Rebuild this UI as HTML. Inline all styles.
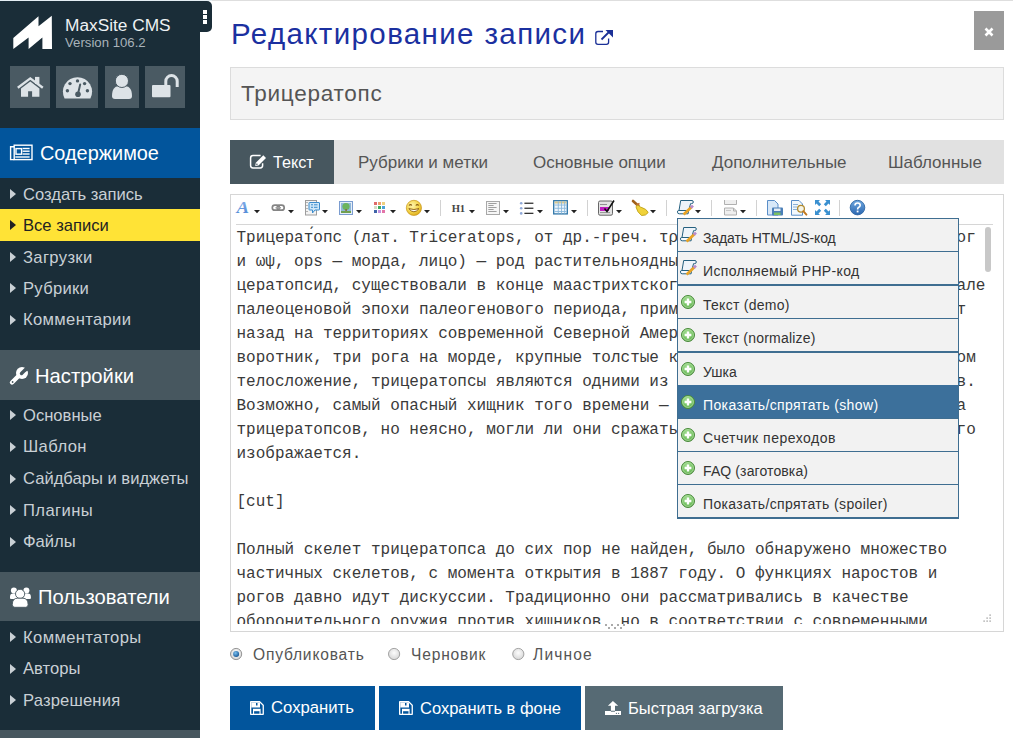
<!DOCTYPE html>
<html><head><meta charset="utf-8">
<style>
*{box-sizing:border-box;margin:0;padding:0}
html,body{width:1013px;height:738px;overflow:hidden;background:#fff}
body{position:relative;font-family:"Liberation Sans",sans-serif}
.a{position:absolute;white-space:pre;line-height:1}
svg.a{overflow:visible}
#topline{left:0;top:0;width:1013px;height:1px;background:#dedede}
#side{left:0;top:1px;width:200px;height:737px;background:#1a2d38}
#tab{left:190px;top:1px;width:22px;height:31px;background:#1a2d38;border-radius:0 5px 5px 0}
.dot{left:203px;width:4px;height:4px;background:#fff}
.ibox{top:66px;height:42px;background:#4a5a63}
.sh{left:0;width:200px;height:50px}
.mi{left:23px;color:#c9d0d5;font-size:16.6px}
.tri{left:9.8px;width:0;height:0;border-top:5px solid transparent;border-bottom:5px solid transparent;border-left:6.3px solid #c9d0d5}
.tb{left:0;top:0}
.arr{position:absolute;top:210px;width:0;height:0;border-left:3px solid transparent;border-right:3px solid transparent;border-top:3.5px solid #222}
.sep{position:absolute;top:200px;width:1px;height:16px;background:#d0d0d0}
.dd{position:absolute;left:678px;width:280px;height:32px;background:#f2f2f2}
.ddb{position:absolute;left:678px;width:280px;background:#3f6e91}
.ddt{position:absolute;left:703px;font-size:14px;color:#333;white-space:pre;line-height:1}
.plus{position:absolute;left:681px;width:14px;height:14px}
.tabt{position:absolute;top:154px;font-size:17px;color:#555;white-space:pre;line-height:1}
</style></head><body>
<div class="a" id="topline"></div>
<div class="a" style="left:0;top:0;width:212px;height:1px;background:#e4eef4"></div>
<div class="a" id="side"></div>
<div class="a" id="tab"></div>
<div class="a dot" style="top:10px"></div>
<div class="a dot" style="top:15px"></div>
<div class="a dot" style="top:20px"></div>

<!-- logo -->
<svg class="a" style="left:0;top:0" width="60" height="60" viewBox="0 0 60 60">
<path d="M13.3 49 L13.3 38 L38.5 16.3 L38.5 26.2 L51.8 15.8 L52 49 L42.4 49 L42.4 37.5 L28.6 49 L28.6 37.5 Z" fill="#fff"/>
</svg>
<div class="a" style="left:65px;top:17px;font-size:17.3px;color:#eef2f4">MaxSite CMS</div>
<div class="a" style="left:65px;top:36px;font-size:13.2px;color:#a9b3ba">Version 106.2</div>

<!-- icon boxes -->
<div class="a ibox" style="left:10px;width:40px"></div>
<div class="a ibox" style="left:56px;width:42px"></div>
<div class="a ibox" style="left:105px;width:34px"></div>
<div class="a ibox" style="left:145px;width:40px"></div>
<!-- home -->
<svg class="a" style="left:17px;top:76px" width="27" height="22" viewBox="0 0 27 22">
 <path d="M0.8 11.8 L13.3 2.4 L25.8 11.8" fill="none" stroke="#dde3e7" stroke-width="2.4"/>
 <rect x="18" y="0.9" width="4.4" height="7" fill="#dde3e7"/>
 <path d="M4 12.6 L13.3 5.6 L22.4 12.6 L22.4 20.8 L15.1 20.8 L15.1 15.2 L11.1 15.2 L11.1 20.8 L4 20.8 Z" fill="#dde3e7"/>
</svg>
<!-- gauge -->
<svg class="a" style="left:62px;top:76px" width="32" height="24" viewBox="0 0 32 24">
 <path d="M2.6 22.6 A14.6 14.6 0 1 1 28.4 22.6 Z" fill="#dde3e7"/>
 <g fill="#4a5a63"><circle cx="8" cy="7.6" r="1.7"/><circle cx="15.5" cy="4.9" r="1.7"/><circle cx="22.6" cy="7.6" r="1.7"/><circle cx="5.4" cy="14.7" r="1.7"/><circle cx="25.4" cy="14.7" r="1.7"/><circle cx="16" cy="18.2" r="2.8"/></g>
 <path d="M16 18 L18.2 8.4" stroke="#4a5a63" stroke-width="2" stroke-linecap="round"/>
</svg>
<!-- user -->
<svg class="a" style="left:111px;top:74px" width="23" height="26" viewBox="0 0 23 26">
 <path d="M1 22 C1 15.5 3.5 12.2 7.5 12.2 L14.5 12.2 C18.5 12.2 21 15.5 21 22 Q21 25 18 25 L4 25 Q1 25 1 22 Z" fill="#dde3e7"/>
 <circle cx="10.9" cy="6.9" r="6.6" fill="#dde3e7" stroke="#4a5a63" stroke-width="1"/>
</svg>
<!-- unlock -->
<svg class="a" style="left:151px;top:74px" width="29" height="25" viewBox="0 0 29 25">
 <rect x="1" y="11" width="18.5" height="12.2" rx="1" fill="#dde3e7"/>
 <path d="M14.8 11.5 L14.8 7.3 A5.7 5.7 0 0 1 26.2 7.3 L26.2 13" fill="none" stroke="#dde3e7" stroke-width="3"/>
</svg>

<!-- section headers -->
<div class="a sh" style="top:128px;background:#02559c"></div>
<svg class="a" style="left:9px;top:144px" width="25" height="18" viewBox="0 0 25 18">
 <rect x="5.2" y="1.2" width="17.8" height="14.4" fill="none" stroke="#fff" stroke-width="1.4"/>
 <path d="M5.2 2.8 H1.6 V15.6 H5.2" fill="none" stroke="#fff" stroke-width="1.4"/>
 <rect x="7" y="4.6" width="5.6" height="5.6" fill="none" stroke="#fff" stroke-width="1.4"/>
 <rect x="13.6" y="3.8" width="7" height="1.4" fill="#fff"/>
 <rect x="13.6" y="6.5" width="7" height="1.4" fill="#fff"/>
 <rect x="13.6" y="9.3" width="7" height="1.4" fill="#fff"/>
 <rect x="6.3" y="12.3" width="14.3" height="1.4" fill="#fff"/>
</svg>
<div class="a" style="left:40px;top:144px;font-size:19.9px;color:#fff">Содержимое</div>
<div class="a" style="left:0;top:209px;width:200px;height:32px;background:#ffe336"></div>

<div class="a tri" style="top:189.4px"></div>
<div class="a tri" style="top:220.4px;border-left-color:#222"></div>
<div class="a tri" style="top:252.4px"></div>
<div class="a tri" style="top:283.4px"></div>
<div class="a tri" style="top:315.4px"></div>
<div class="a mi" style="top:187px">Создать запись</div>
<div class="a mi" style="top:218px;color:#222">Все записи</div>
<div class="a mi" style="top:250px;letter-spacing:0.35px">Загрузки</div>
<div class="a mi" style="top:281px;letter-spacing:0.3px">Рубрики</div>
<div class="a mi" style="top:312px;letter-spacing:0.35px">Комментарии</div>

<div class="a sh" style="top:350px;background:#47575f"></div>
<svg class="a" style="left:9px;top:366px" width="21" height="20" viewBox="0 0 21 20">
 <path d="M3 16.5 L10.5 9" stroke="#fff" stroke-width="4.4" stroke-linecap="round"/>
 <circle cx="13" cy="7" r="6" fill="#fff"/>
 <path d="M13 7 L19.5 0.5 L21 -1 L23 3 Z" fill="#47575f"/>
 <path d="M12.5 7.5 L17 3" stroke="#47575f" stroke-width="3.4" stroke-linecap="round"/>
 <circle cx="3.6" cy="16" r="0.9" fill="#47575f"/>
</svg>
<div class="a" style="left:35px;top:366px;font-size:20.2px;color:#fff">Настройки</div>
<div class="a tri" style="top:410.4px"></div>
<div class="a tri" style="top:442.4px"></div>
<div class="a tri" style="top:474.4px"></div>
<div class="a tri" style="top:505.4px"></div>
<div class="a tri" style="top:537.4px"></div>
<div class="a mi" style="top:408px">Основные</div>
<div class="a mi" style="top:439px;letter-spacing:0.4px">Шаблон</div>
<div class="a mi" style="top:471px">Сайдбары и виджеты</div>
<div class="a mi" style="top:503px;letter-spacing:0.4px">Плагины</div>
<div class="a mi" style="top:534px">Файлы</div>

<div class="a sh" style="top:572px;background:#47575f;height:49px"></div>
<svg class="a" style="left:9px;top:587px" width="23" height="21" viewBox="0 0 23 21">
 <g fill="#fff">
 <circle cx="4.9" cy="3.4" r="3"/><circle cx="17.4" cy="3.4" r="3"/>
 <path d="M1 10 Q0.9 6.6 4.2 6.6 H7.5 L9 12 H2 Q1 12 1 11 Z"/>
 <path d="M21.9 10 Q22 6.6 18.7 6.6 H15.4 L13.9 12 H20.9 Q21.9 12 21.9 11 Z"/>
 </g>
 <circle cx="11.1" cy="6.9" r="4.6" fill="#fff" stroke="#47575f" stroke-width="0.9"/>
 <path d="M3.3 17.6 Q3.3 11.2 8.6 11.2 H13.8 Q19.1 11.2 19.1 17.6 Q19.1 20.3 16.6 20.3 H5.8 Q3.3 20.3 3.3 17.6 Z" fill="#fff" stroke="#47575f" stroke-width="0.9"/>
</svg>
<div class="a" style="left:38px;top:587px;font-size:20.2px;color:#fff">Пользователи</div>
<div class="a tri" style="top:632.4px"></div>
<div class="a tri" style="top:664.4px"></div>
<div class="a tri" style="top:695.4px"></div>
<div class="a mi" style="top:630px;letter-spacing:0.37px">Комментаторы</div>
<div class="a mi" style="top:661px">Авторы</div>
<div class="a mi" style="top:693px;letter-spacing:0.17px">Разрешения</div>
<div class="a sh" style="top:730px;background:#47575f"></div>

<!-- main -->
<div class="a" style="left:231px;top:19px;font-size:29.5px;letter-spacing:1.37px;color:#1b30a0">Редактирование записи</div>
<svg class="a" style="left:594px;top:29px" width="20" height="17" viewBox="0 0 20 17">
 <path d="M9 2.5 H4 Q1.8 2.5 1.8 4.7 V13.2 Q1.8 15.3 4 15.3 H12.4 Q14.6 15.3 14.6 13.2 V9.5" fill="none" stroke="#1b3097" stroke-width="1.3"/>
 <path d="M7.5 10.5 L16 2" stroke="#1b3097" stroke-width="1.8"/>
 <path d="M11.5 1 H19 V8.5 Z" fill="#1b3097"/>
</svg>
<div class="a" style="left:974px;top:11px;width:30px;height:39px;background:#9a9a9a"></div>
<svg class="a" style="left:984px;top:27px" width="10" height="10" viewBox="0 0 10 10">
 <path d="M1.5 1.5 L8.5 8.5 M8.5 1.5 L1.5 8.5" stroke="#fff" stroke-width="2.6"/>
</svg>

<div class="a" style="left:230px;top:67px;width:774px;height:53px;background:#f4f4f4;border:1px solid #dcdcdc"></div>
<div class="a" style="left:241px;top:83px;font-size:22.5px;letter-spacing:0.75px;color:#555">Трицератопс</div>

<div class="a" style="left:230px;top:140px;width:774px;height:44px;background:#e1e1e1"></div>
<div class="a" style="left:230px;top:140px;width:104px;height:44px;background:#47575f"></div>
<svg class="a" style="left:249px;top:153px" width="19" height="16" viewBox="0 0 19 16">
 <path d="M11.6 2.6 H4 Q1.6 2.6 1.6 5 V12.6 Q1.6 15 4 15 H11.2 Q13.6 15 13.6 12.6 V10.2" fill="none" stroke="#fff" stroke-width="1.5"/>
 <path d="M6.2 13 L6.8 9.7 L14.3 2.2 L17 4.9 L9.5 12.4 Z" fill="#fff"/>
 <circle cx="7.9" cy="11.3" r="0.8" fill="#47575f"/>
</svg>
<div class="tabt" style="left:273px;color:#fff;font-size:16.2px">Текст</div>
<div class="tabt" style="left:358px">Рубрики и метки</div>
<div class="tabt" style="left:533px">Основные опции</div>
<div class="tabt" style="left:712px">Дополнительные</div>
<div class="tabt" style="left:888px">Шаблонные</div>

<!-- editor -->
<div class="a" style="left:230px;top:194px;width:774px;height:438px;border:1px solid #d6d6d6"></div>
<div class="a" style="left:236px;top:224px;width:757px;height:1px;background:#d6d6d6"></div>
<svg class="a tb" width="1013" height="230" viewBox="0 0 1013 230">
<defs>
 <linearGradient id="gA" x1="0" y1="0" x2="0" y2="1"><stop offset="0" stop-color="#8cb4ec"/><stop offset="1" stop-color="#4a84d4"/></linearGradient>
 <radialGradient id="gS" cx="0.4" cy="0.35" r="0.7"><stop offset="0" stop-color="#fff6b0"/><stop offset="0.6" stop-color="#f3d44a"/><stop offset="1" stop-color="#d9a516"/></radialGradient>
 <linearGradient id="gB" x1="0" y1="0" x2="0" y2="1"><stop offset="0" stop-color="#70a8e0"/><stop offset="1" stop-color="#2a66b0"/></linearGradient>
</defs>
<!-- A -->
<text transform="translate(236.4 212.8) scale(1.18 1)" x="0" y="0" font-family="Liberation Serif" font-weight="bold" font-style="italic" font-size="16" fill="url(#gA)">A</text>
<!-- link -->
<rect x="272.3" y="205.2" width="7" height="5" rx="2.5" fill="none" stroke="#858585" stroke-width="1.7"/>
<rect x="277.2" y="205.2" width="7" height="5" rx="2.5" fill="none" stroke="#858585" stroke-width="1.7"/>
<rect x="275.5" y="207" width="5.5" height="1.5" fill="#a0a0a0"/>
<!-- note -->
<rect x="305.5" y="200.5" width="11" height="14.5" fill="#f3f3f3" stroke="#9d9d9d"/>
<path d="M309.5 202.5 H319 Q319.5 202.5 319.5 203 V209.5 Q319.5 210 319 210 H315 L312.5 213 L312.5 210 H309.5 Q309 210 309 209.5 V203 Q309 202.5 309.5 202.5 Z" fill="#cfe8f8" stroke="#3c8ccc"/>
<g fill="#3c8ccc"><rect x="311" y="204.3" width="2" height="1"/><rect x="314" y="204.3" width="3.5" height="1"/><rect x="311" y="206.8" width="2" height="1"/><rect x="314" y="206.8" width="3.5" height="1"/></g>
<g fill="#777"><rect x="306.5" y="202" width="1" height="1"/><rect x="306.5" y="205" width="1" height="1"/><rect x="306.5" y="208" width="1" height="1"/><rect x="306.5" y="211" width="1" height="1"/></g>
<!-- image -->
<rect x="339.5" y="201.5" width="13" height="13" fill="#e6eef8" stroke="#7a9cd0"/>
<rect x="341" y="203" width="10" height="10" fill="#8fb8d8"/>
<circle cx="346" cy="206.5" r="3.6" fill="#6cb45c"/>
<rect x="345.3" y="209" width="1.6" height="3" fill="#8a6a3a"/>
<rect x="341" y="211" width="10" height="2" fill="#70a050"/>
<!-- grid -->
<g>
<rect x="374" y="202" width="3" height="3" fill="#e06a6a"/><rect x="378" y="202" width="3" height="3" fill="#eea070"/><rect x="382" y="202" width="3" height="3" fill="#eed080"/>
<rect x="374" y="206" width="3" height="3" fill="#d6dcc6"/><rect x="378" y="206" width="3" height="3" fill="#3caa5a"/><rect x="382" y="206" width="3" height="3" fill="#4aa0d8"/>
<rect x="374" y="210" width="3" height="3" fill="#3f64a8"/><rect x="378" y="210" width="3" height="3" fill="#c494e0"/><rect x="382" y="210" width="3" height="3" fill="#e474a8"/>
</g>
<!-- smiley -->
<circle cx="413.9" cy="207.9" r="7.6" fill="url(#gS)" stroke="#c9961a" stroke-width="0.7"/>
<path d="M409 205.5 Q410.5 203.8 412 205.5 M415.8 205.5 Q417.3 203.8 418.8 205.5" fill="none" stroke="#8a5a10" stroke-width="1.1"/>
<path d="M408.8 208.6 Q413.9 215 419 208.6 Q413.9 210.5 408.8 208.6 Z" fill="#fff" stroke="#8a5a10" stroke-width="0.9"/>
<!-- sep -->
<rect x="440" y="200" width="1" height="16" fill="#d2d2d2"/>
<!-- H1 -->
<text x="451.8" y="211.8" font-family="Liberation Serif" font-weight="bold" font-size="10.6" fill="#454545" letter-spacing="-0.4">H1</text>
<!-- para -->
<rect x="486.5" y="201.5" width="13" height="13" fill="#f6f6f6" stroke="#a8a8a8"/>
<g fill="#8a8a8a"><rect x="488.3" y="203" width="8.3" height="0.8"/><rect x="488.3" y="205.1" width="5.3" height="0.8"/><rect x="488.3" y="207.1" width="8.3" height="0.8"/><rect x="488.3" y="209" width="5.3" height="0.8"/><rect x="488.3" y="211" width="8.3" height="0.8"/></g>
<!-- list -->
<g fill="#8fa8d8"><circle cx="521.2" cy="203.2" r="1.3"/><circle cx="521.2" cy="208.3" r="1.3"/><circle cx="521.2" cy="213.4" r="1.3"/></g>
<g fill="#333"><rect x="524.4" y="202.6" width="9" height="1.3"/><rect x="524.4" y="207.6" width="9" height="1.3"/><rect x="524.4" y="212.7" width="9" height="1.3"/></g>
<!-- table -->
<rect x="553.7" y="200.7" width="13.6" height="13.2" fill="#eef6fc" stroke="#2f76a8" stroke-width="1.3"/>
<rect x="554.5" y="201.5" width="12" height="2" fill="#d8c890"/>
<g fill="#8ab8dc"><rect x="554.5" y="204.6" width="12" height="0.9"/><rect x="554.5" y="207.8" width="12" height="0.9"/><rect x="554.5" y="211" width="12" height="0.9"/><rect x="557.8" y="201.5" width="0.9" height="12"/><rect x="561" y="201.5" width="0.9" height="12"/><rect x="564.2" y="201.5" width="0.9" height="12"/></g>
<!-- sep -->
<rect x="587" y="200" width="1" height="16" fill="#d2d2d2"/>
<!-- edit purple -->
<rect x="598.5" y="201" width="14" height="14.2" rx="1.5" fill="#e4e4e4" stroke="#666" stroke-width="1"/>
<rect x="600" y="207" width="9" height="4" fill="#c020c0"/>
<rect x="600" y="212.2" width="10" height="0.9" fill="#888"/>
<rect x="600" y="204" width="7" height="0.9" fill="#888"/>
<path d="M604.5 208.5 L607 211.5 L614 200.5" fill="none" stroke="#111" stroke-width="1.6"/>
<!-- broom -->
<path d="M633 201 L638.5 206" stroke="#a0601a" stroke-width="2.6" stroke-linecap="round"/>
<path d="M637 204.5 L640.5 207 Q647 209 648.2 212.5 Q646 216 641.5 215.5 Q637 212 636 207 Z" fill="#f0d23a" stroke="#b89a10" stroke-width="0.8"/>
<path d="M636.5 205 L639.5 203.5" stroke="#c07030" stroke-width="1.4"/>
<!-- sep -->
<rect x="666" y="200" width="1" height="16" fill="#d2d2d2"/>
<!-- scroll -->
<g transform="translate(677 200)">
  <path d="M3.7 0.5 H15 Q16.3 0.5 16.3 2 Q16.3 3.6 14.6 3.6 H13.6 L11.6 10.5 H2 Z" fill="#eef4fa" stroke="#25607f" stroke-width="1"/>
  <path d="M1.2 10.5 H11.6 L11.1 13.8 H2.2 Q0.5 13.8 0.5 12.1 Q0.5 10.5 1.2 10.5 Z" fill="#f6fbff" stroke="#25607f" stroke-width="1"/>
  <path d="M6.6 14.6 L14.6 7" stroke="#e9a324" stroke-width="2.7"/>
  <path d="M13.8 7.8 L16 5.6" stroke="#b98ac8" stroke-width="2.7"/>
</g>
<!-- sep -->
<rect x="711" y="200" width="1" height="16" fill="#d2d2d2"/>
<!-- pagebreak -->
<path d="M724.5 200 V204.5 H736.5 V200" fill="#efefef" stroke="#b0b0b0"/>
<path d="M724.5 215 V208 H733.5 L736.5 211 V215 Z" fill="#efefef" stroke="#b0b0b0"/>
<path d="M733.5 208 V211 H736.5" fill="none" stroke="#b0b0b0"/>
<rect x="726" y="210" width="5" height="1" fill="#c8c8c8"/>
<!-- sep -->
<rect x="756" y="200" width="1" height="16" fill="#d2d2d2"/>
<!-- save doc -->
<path d="M767.5 200.5 H774.5 L778 204 V215 H767.5 Z" fill="#d8e8f8" stroke="#5a8ec8"/>
<rect x="772" y="207.5" width="11" height="8" rx="1" fill="#4a7fb8"/>
<rect x="774" y="208.5" width="6.5" height="2.5" fill="#e6eef6"/>
<rect x="774" y="212.5" width="6.5" height="2.5" fill="#7ac060"/>
<!-- preview -->
<path d="M791.5 200.5 H799 L802.5 204 V215.2 H791.5 Z" fill="#f2f8fc" stroke="#5a8ec8"/>
<g fill="#8ab0d8"><rect x="793" y="204" width="5" height="1"/><rect x="793" y="206.5" width="4" height="1"/><rect x="793" y="209" width="4" height="1"/></g>
<circle cx="801" cy="208.8" r="3.4" fill="#f4f4e8" stroke="#b08a30" stroke-width="1.3"/>
<path d="M803.3 211.2 L806.4 214.6" stroke="#c07820" stroke-width="2" stroke-linecap="round"/>
<!-- fullscreen -->
<g fill="#3a90d0">
<path d="M815 200 H820 L818.5 201.5 L821.2 204.2 L819.2 206.2 L816.5 203.5 L815 205 Z"/>
<path d="M830 200 H825 L826.5 201.5 L823.8 204.2 L825.8 206.2 L828.5 203.5 L830 205 Z"/>
<path d="M815 215 H820 L818.5 213.5 L821.2 210.8 L819.2 208.8 L816.5 211.5 L815 210 Z"/>
<path d="M830 215 H825 L826.5 213.5 L823.8 210.8 L825.8 208.8 L828.5 211.5 L830 210 Z"/>
</g>
<!-- sep -->
<rect x="839" y="200" width="1" height="16" fill="#d2d2d2"/>
<!-- help -->
<circle cx="857.5" cy="207.6" r="7.3" fill="url(#gB)" stroke="#1f5a9c" stroke-width="0.8"/>
<path d="M855 205.5 Q855 203 857.6 203 Q860.2 203 860.2 205.3 Q860.2 206.8 858.5 207.5 Q857.6 208 857.6 209.6" fill="none" stroke="#fff" stroke-width="1.6"/>
<rect x="856.7" y="210.6" width="1.8" height="1.8" fill="#fff"/>
<!-- arrows -->
<g fill="#222">
<path d="M254 210 h6 l-3 3.3 z"/><path d="M288 210 h6 l-3 3.3 z"/><path d="M322 210 h6 l-3 3.3 z"/><path d="M356 210 h6 l-3 3.3 z"/><path d="M390 210 h6 l-3 3.3 z"/><path d="M424 210 h6 l-3 3.3 z"/><path d="M469 210 h6 l-3 3.3 z"/><path d="M503 210 h6 l-3 3.3 z"/><path d="M537 210 h6 l-3 3.3 z"/><path d="M571 210 h6 l-3 3.3 z"/><path d="M616 210 h6 l-3 3.3 z"/><path d="M650 210 h6 l-3 3.3 z"/><path d="M695 210 h6 l-3 3.3 z"/><path d="M740 210 h6 l-3 3.3 z"/>
</g>
</svg>

<div class="a" style="left:232px;top:225px;width:760px;height:399px;overflow:hidden">
<div style="position:absolute;left:4.5px;top:1px;font-family:'Liberation Mono',monospace;font-size:16px;line-height:24px;white-space:pre;color:#3a3a3a">Трицерат́опс (лат. Triceratops, от др.-греч. τρι- «три», κέρας «рог» и ὤψ «рог
и ωψ, ops — морда, лицо) — род растительноядных динозавров из семейства
цератопсид, существовали в конце маастрихтского яруса мелового периода и в але
палеоценовой эпохи палеогенового периода, примерно 68—66 миллионов ле      т
назад на территориях современной Северной Америки. Характерные черты — боль
воротник, три рога на морде, крупные толстые кости конечностей и массивное ом
телосложение, трицератопсы являются одними из самых узнаваемых динозавро   в.
Возможно, самый опасный хищник того времени — тираннозавр охотился на трицеа
трицератопсов, но неясно, могли ли они сражаться так, как это обычно изобраго
изображается.

[cut]

Полный скелет трицератопса до сих пор не найден, было обнаружено множество
частичных скелетов, с момента открытия в 1887 году. О функциях наростов и
рогов давно идут дискуссии. Традиционно они рассматривались в качестве
оборонительного оружия против хищников, но в соответствии с современными
исследованиями</div>
</div>
<div class="a" style="left:985px;top:227px;width:6px;height:45px;border-radius:3px;background:#c8c8c8"></div>
<svg class="a" style="left:982px;top:612px" width="12" height="12" viewBox="0 0 12 12"><g fill="#888"><rect x="7.5" y="2.5" width="1.2" height="1.2"/><rect x="4.5" y="5.5" width="1.2" height="1.2"/><rect x="7.5" y="5.5" width="1.2" height="1.2"/><rect x="1.5" y="8.5" width="1.2" height="1.2"/><rect x="4.5" y="8.5" width="1.2" height="1.2"/><rect x="7.5" y="8.5" width="1.2" height="1.2"/></g></svg>
<div class="a" style="left:602px;top:619px;width:19px;height:12px;background:#fff"></div>
<svg class="a" style="left:604px;top:623px" width="24" height="7" viewBox="0 0 24 7"><g fill="#aaa"><rect x="1" y="1" width="2" height="2"/><rect x="7" y="1" width="2" height="2"/><rect x="13" y="1" width="2" height="2"/><rect x="19" y="1" width="2" height="2"/><rect x="4" y="4" width="2" height="2"/><rect x="10" y="4" width="2" height="2"/><rect x="16" y="4" width="2" height="2"/></g></svg>

<div class="a" style="left:677px;top:218px;width:282px;height:301px;background:#3f6e91"></div>
<div class="dd" style="top:219px"></div>
<div class="dd" style="top:252px"></div>
<div class="dd" style="top:286px"></div>
<div class="dd" style="top:319px"></div>
<div class="dd" style="top:353px"></div>
<div class="dd" style="top:385px;height:33px;background:#3c709b"></div>
<div class="dd" style="top:419px"></div>
<div class="dd" style="top:452px"></div>
<div class="dd" style="top:485px"></div>
<svg class="a" style="left:0;top:0" width="1013" height="530" viewBox="0 0 1013 530">
<defs>
 <radialGradient id="gP" cx="0.45" cy="0.35" r="0.65"><stop offset="0" stop-color="#a8e098"/><stop offset="0.7" stop-color="#72c060"/><stop offset="1" stop-color="#5aa04a"/></radialGradient>
 
 
</defs>
<g transform="translate(680 227)">
  <path d="M3.7 0.5 H15 Q16.3 0.5 16.3 2 Q16.3 3.6 14.6 3.6 H13.6 L11.6 10.5 H2 Z" fill="#eef4fa" stroke="#25607f" stroke-width="1"/>
  <path d="M1.2 10.5 H11.6 L11.1 13.8 H2.2 Q0.5 13.8 0.5 12.1 Q0.5 10.5 1.2 10.5 Z" fill="#f6fbff" stroke="#25607f" stroke-width="1"/>
  <path d="M6.6 14.6 L14.6 7" stroke="#e9a324" stroke-width="2.7"/>
  <path d="M13.8 7.8 L16 5.6" stroke="#b98ac8" stroke-width="2.7"/>
 </g>
<g transform="translate(680 260)">
  <path d="M3.7 0.5 H15 Q16.3 0.5 16.3 2 Q16.3 3.6 14.6 3.6 H13.6 L11.6 10.5 H2 Z" fill="#eef4fa" stroke="#25607f" stroke-width="1"/>
  <path d="M1.2 10.5 H11.6 L11.1 13.8 H2.2 Q0.5 13.8 0.5 12.1 Q0.5 10.5 1.2 10.5 Z" fill="#f6fbff" stroke="#25607f" stroke-width="1"/>
  <path d="M6.6 14.6 L14.6 7" stroke="#e9a324" stroke-width="2.7"/>
  <path d="M13.8 7.8 L16 5.6" stroke="#b98ac8" stroke-width="2.7"/>
 </g>
<g transform="translate(681 295)">
  <circle cx="7" cy="7" r="6.5" fill="url(#gP)" stroke="#4a8a3c" stroke-width="1"/><circle cx="7" cy="7" r="5.4" fill="none" stroke="#b8e4a8" stroke-width="0.7"/>
  <path d="M7 3.6 V10.4 M3.6 7 H10.4" stroke="#fff" stroke-width="2.3"/>
 </g>
<g transform="translate(681 328)">
  <circle cx="7" cy="7" r="6.5" fill="url(#gP)" stroke="#4a8a3c" stroke-width="1"/><circle cx="7" cy="7" r="5.4" fill="none" stroke="#b8e4a8" stroke-width="0.7"/>
  <path d="M7 3.6 V10.4 M3.6 7 H10.4" stroke="#fff" stroke-width="2.3"/>
 </g>
<g transform="translate(681 362)">
  <circle cx="7" cy="7" r="6.5" fill="url(#gP)" stroke="#4a8a3c" stroke-width="1"/><circle cx="7" cy="7" r="5.4" fill="none" stroke="#b8e4a8" stroke-width="0.7"/>
  <path d="M7 3.6 V10.4 M3.6 7 H10.4" stroke="#fff" stroke-width="2.3"/>
 </g>
<g transform="translate(681 395)">
  <circle cx="7" cy="7" r="6.5" fill="url(#gP)" stroke="#4a8a3c" stroke-width="1"/><circle cx="7" cy="7" r="5.4" fill="none" stroke="#b8e4a8" stroke-width="0.7"/>
  <path d="M7 3.6 V10.4 M3.6 7 H10.4" stroke="#fff" stroke-width="2.3"/>
 </g>
<g transform="translate(681 428)">
  <circle cx="7" cy="7" r="6.5" fill="url(#gP)" stroke="#4a8a3c" stroke-width="1"/><circle cx="7" cy="7" r="5.4" fill="none" stroke="#b8e4a8" stroke-width="0.7"/>
  <path d="M7 3.6 V10.4 M3.6 7 H10.4" stroke="#fff" stroke-width="2.3"/>
 </g>
<g transform="translate(681 461)">
  <circle cx="7" cy="7" r="6.5" fill="url(#gP)" stroke="#4a8a3c" stroke-width="1"/><circle cx="7" cy="7" r="5.4" fill="none" stroke="#b8e4a8" stroke-width="0.7"/>
  <path d="M7 3.6 V10.4 M3.6 7 H10.4" stroke="#fff" stroke-width="2.3"/>
 </g>
<g transform="translate(681 494)">
  <circle cx="7" cy="7" r="6.5" fill="url(#gP)" stroke="#4a8a3c" stroke-width="1"/><circle cx="7" cy="7" r="5.4" fill="none" stroke="#b8e4a8" stroke-width="0.7"/>
  <path d="M7 3.6 V10.4 M3.6 7 H10.4" stroke="#fff" stroke-width="2.3"/>
 </g>
</svg>
<div class="ddt" style="top:231px;letter-spacing:-0.1px">Задать HTML/JS-код</div>
<div class="ddt" style="top:264px;letter-spacing:0.33px">Исполняемый PHP-код</div>
<div class="ddt" style="top:298px;letter-spacing:0.27px">Текст (demo)</div>
<div class="ddt" style="top:331px;letter-spacing:0.2px">Текст (normalize)</div>
<div class="ddt" style="top:365px">Ушка</div>
<div class="ddt" style="top:398px;color:#fff;letter-spacing:0.37px">Показать/спрятать (show)</div>
<div class="ddt" style="top:431px;letter-spacing:0.5px">Счетчик переходов</div>
<div class="ddt" style="top:464px;letter-spacing:0.11px">FAQ (заготовка)</div>
<div class="ddt" style="top:497px;letter-spacing:0.36px">Показать/спрятать (spoiler)</div>


<!-- radios -->
<svg class="a" style="left:0;top:640px" width="600" height="30" viewBox="0 640 600 30">
<defs>
 <radialGradient id="gR" cx="0.5" cy="0.4" r="0.6"><stop offset="0" stop-color="#fdfdfd"/><stop offset="1" stop-color="#d6d6d6"/></radialGradient>
 <radialGradient id="gRd" cx="0.4" cy="0.35" r="0.65"><stop offset="0" stop-color="#7ac0f0"/><stop offset="1" stop-color="#1a5a98"/></radialGradient>
</defs>
<circle cx="236.1" cy="654" r="5.6" fill="url(#gR)" stroke="#8a8a8a" stroke-width="0.9"/>
<circle cx="236.1" cy="654" r="3" fill="url(#gRd)"/>
<circle cx="394.1" cy="654" r="5.6" fill="url(#gR)" stroke="#9a9a9a" stroke-width="0.9"/>
<circle cx="518.3" cy="654" r="5.6" fill="url(#gR)" stroke="#9a9a9a" stroke-width="0.9"/>
</svg>

<div class="a" style="left:253px;top:647px;font-size:15.6px;letter-spacing:0.8px;color:#555">Опубликовать</div>
<div class="a" style="left:411px;top:647px;font-size:15.6px;letter-spacing:0.8px;color:#555">Черновик</div>
<div class="a" style="left:533px;top:647px;font-size:15.6px;letter-spacing:1.15px;color:#555">Личное</div>

<!-- buttons -->
<div class="a" style="left:230px;top:686px;width:145px;height:44px;background:#02559c"></div>
<div class="a" style="left:379px;top:686px;width:202px;height:44px;background:#02559c"></div>
<div class="a" style="left:585px;top:686px;width:198px;height:44px;background:#566a74"></div>
<svg class="a" style="left:249px;top:700px" width="16" height="16" viewBox="0 0 16 16">
 <path d="M1 1.8 Q1 1 1.8 1 H10.8 L14.9 5 V14.2 Q14.9 15 14.1 15 H1.8 Q1 15 1 14.2 Z" fill="#fff"/>
 <path d="M2.3 2.3 H10.3 L13.6 5.6 V13.7 H2.3 Z" fill="#02559c"/>
 <rect x="2.3" y="2.3" width="8.7" height="5.2" fill="#fff"/>
 <rect x="7" y="3" width="1.5" height="2.5" fill="#02559c"/>
 <rect x="4" y="8.8" width="7.6" height="6.2" fill="#fff"/>
 <rect x="5.1" y="11.2" width="5.4" height="2.5" fill="#02559c"/>
</svg>
<svg class="a" style="left:398px;top:700px" width="16" height="16" viewBox="0 0 16 16">
 <path d="M1 1.8 Q1 1 1.8 1 H10.8 L14.9 5 V14.2 Q14.9 15 14.1 15 H1.8 Q1 15 1 14.2 Z" fill="#fff"/>
 <path d="M2.3 2.3 H10.3 L13.6 5.6 V13.7 H2.3 Z" fill="#02559c"/>
 <rect x="2.3" y="2.3" width="8.7" height="5.2" fill="#fff"/>
 <rect x="7" y="3" width="1.5" height="2.5" fill="#02559c"/>
 <rect x="4" y="8.8" width="7.6" height="6.2" fill="#fff"/>
 <rect x="5.1" y="11.2" width="5.4" height="2.5" fill="#02559c"/>
</svg>
<svg class="a" style="left:604px;top:700px" width="18" height="16" viewBox="0 0 18 16">
 <path d="M3.9 5.8 L8.9 0.9 L14.2 5.8 H11 V10.7 H6.9 V5.8 Z" fill="#fff"/>
 <rect x="1" y="11" width="16" height="4" fill="#fff"/>
 <rect x="6.9" y="11" width="4.1" height="0.7" fill="#566a74"/>
 <circle cx="12.4" cy="13.3" r="0.65" fill="#566a74"/><circle cx="14.6" cy="13.3" r="0.65" fill="#566a74"/>
</svg>
<div class="a" style="left:271px;top:700px;font-size:16.7px;color:#fff">Сохранить</div>
<div class="a" style="left:420px;top:700px;font-size:16.5px;color:#fff">Сохранить в фоне</div>
<div class="a" style="left:628px;top:700px;font-size:16.5px;color:#fff">Быстрая загрузка</div>
</body></html>
